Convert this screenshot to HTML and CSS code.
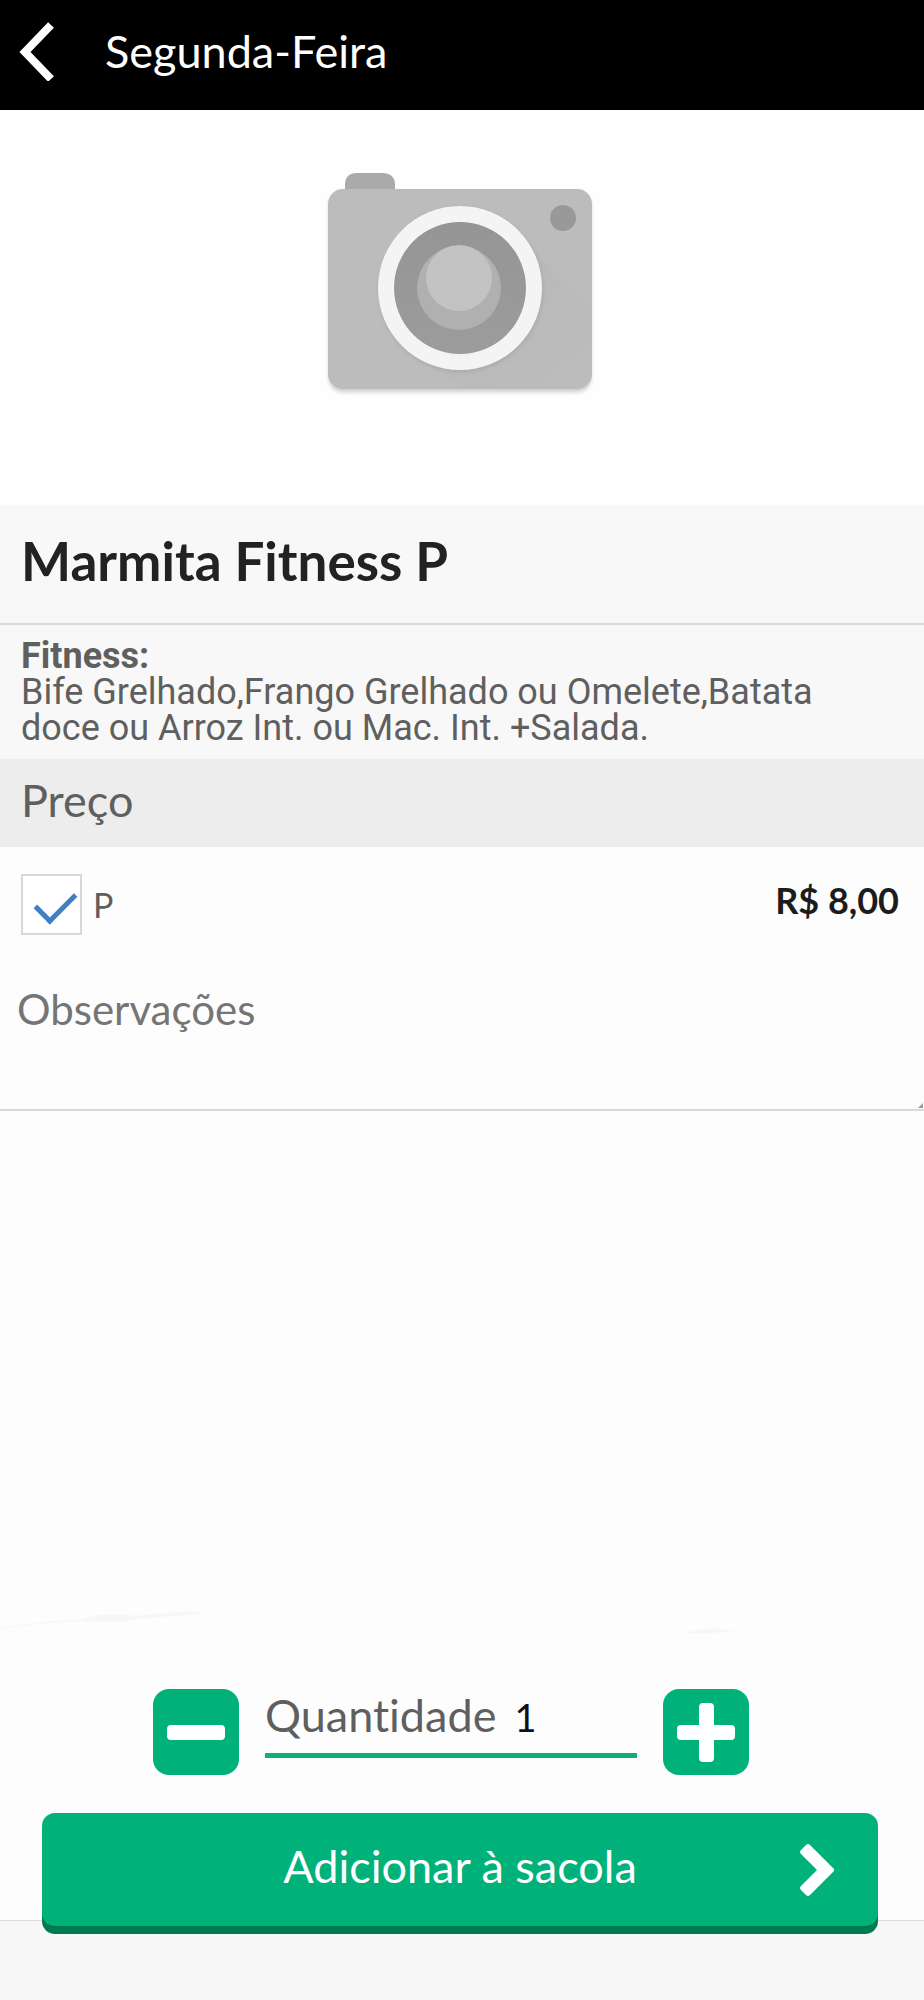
FILE: index.html
```html
<!DOCTYPE html>
<html lang="pt-BR">
<head>
<meta charset="utf-8">
<meta name="viewport" content="width=device-width, initial-scale=1">
<title>Marmita Fitness P</title>
<link rel="stylesheet" href="styles.css">
</head>
<body>
<header class="topbar">
  <button class="back" type="button" aria-label="Voltar">
    <svg viewBox="0 0 36 60" width="36" height="60" aria-hidden="true"><path d="M33 4 L7 31 L33 58" fill="none" stroke="#fff" stroke-width="8"/></svg>
  </button>
  <span class="topbar-title">Segunda-Feira</span>
</header>
<main class="product">
  <div class="photo">
    <svg viewBox="0 0 280 240" width="280" height="240" role="img" aria-label="Sem foto">
      <defs>
        <filter id="soft" x="-10%" y="-10%" width="120%" height="120%"><feGaussianBlur stdDeviation="2"/></filter>
        <linearGradient id="lens" x1="0" y1="0" x2="0" y2="1"><stop offset="0" stop-color="#959595"/><stop offset="1" stop-color="#9c9c9c"/></linearGradient>
        <linearGradient id="cast" x1="0" y1="0" x2="1" y2="1"><stop offset="0.3" stop-color="#adadad"/><stop offset="1" stop-color="#bdbdbd"/></linearGradient>
      </defs>
      <rect x="9" y="22" width="262" height="200" rx="14" fill="#ccc" filter="url(#soft)"/>
      <path d="M25 30V15q0-12 12-12h25q13 0 13 12v15z" fill="#aaa"/>
      <rect x="8" y="19" width="264" height="200" rx="15" fill="#bcbcbc"/>
      <path d="M203 70L272 138V204q0 15-15 15H150L94 188z" fill="url(#cast)" opacity=".25"/>
      <circle cx="141" cy="120" r="82" fill="#aaa" filter="url(#soft)"/>
      <circle cx="140" cy="118" r="82" fill="#f4f4f4"/>
      <circle cx="140" cy="118" r="66" fill="url(#lens)"/>
      <circle cx="139" cy="118" r="42" fill="#b0b0b0"/>
      <circle cx="139" cy="108" r="33" fill="#c3c3c3"/>
      <circle cx="243" cy="48" r="13" fill="#999"/>
    </svg>
  </div>
  <h1 class="name">Marmita Fitness P</h1>
  <div class="description">
    <strong class="kind">Fitness:</strong>
    <p class="dishes">Bife Grelhado,Frango Grelhado ou Omelete,Batata doce ou Arroz Int. ou Mac. Int. +Salada.</p>
  </div>
  <h2 class="section-title">Preço</h2>
  <div class="option">
    <label class="choice"><input class="tick" type="checkbox" checked><span>P</span></label>
    <span class="price">R$ 8,00</span>
  </div>
  <div class="notes">
    <textarea class="notes-field" aria-label="Observações" placeholder="Observações"></textarea>
    <svg class="grip" viewBox="0 0 6 6" width="6" height="6" aria-hidden="true"><path d="M0 5L5 0V5z" fill="#999"/></svg>
  </div>
</main>
<section class="order">
  <svg class="wave" viewBox="0 0 924 24" aria-hidden="true"><path d="M0 17Q60 8 78 9Q94 3 119 3Q134 6 154 3L190 0L203 3L160 6Q134 8 122 11L78 10Q40 12 0 18zM685 22Q712 14 734 20Q712 23 685 22z" fill="#f7f7f7"/></svg>
  <div class="quantity">
    <button class="step" type="button" aria-label="Diminuir"><svg viewBox="0 0 86 86" width="86" height="86" aria-hidden="true"><rect x="14" y="36" width="58" height="15" rx="4" fill="#fff"/></svg></button>
    <label class="amount"><span>Quantidade</span><input class="amount-field" type="text" inputmode="numeric" value="1"></label>
    <button class="step" type="button" aria-label="Aumentar"><svg viewBox="0 0 86 86" width="86" height="86" aria-hidden="true"><rect x="14" y="36" width="58" height="15" rx="4" fill="#fff"/><rect x="36" y="14" width="15" height="59" rx="4" fill="#fff"/></svg></button>
  </div>
  <button class="add" type="button">
    <span class="add-label">Adicionar à sacola</span>
    <svg viewBox="0 0 36 54" width="36" height="54" aria-hidden="true"><path d="M3 6L7 2Q9 0 11 2L35 26V28L11 52Q9 54 7 52L2 47Q0 45 2 43L18 27L2 11Q0 9 2 7z" fill="#fff"/></svg>
  </button>
</section>
<footer class="footer"></footer>
</body>
</html>
```
FILE: styles.css
```css
* { box-sizing: border-box; }
body {
  margin: 0;
  min-height: 100vh;
  display: flex;
  flex-direction: column;
  background: #fdfdfd;
  color: #5f5f5f;
  font-family: Lato, "Open Sans", sans-serif;
  font-size: 45px;
  line-height: 52px;
  font-variant-ligatures: none;
}
button, input, textarea { font: inherit; }
button { border: 0; padding: 0; cursor: pointer; }
svg { display: block; }
.topbar {
  display: flex;
  align-items: center;
  gap: 51px;
  height: 110px;
  padding: 0 18px 8px;
  background: #000;
  color: #fff;
}
.back { background: none; }
.product { flex: 1; }
.photo {
  display: flex;
  justify-content: center;
  padding: 60px 4px 95px 0;
  background: #fefefe;
}
.name {
  margin: 0;
  padding: 29px 21px 36px;
  border-bottom: 2px solid #d8d8d8;
  background: #f8f8f8;
  color: #222;
  font-size: 53px;
  line-height: 53px;
  font-weight: 700;
}
.description {
  padding: 13px 80px 13px 21px;
  background: #f8f8f8;
  font-family: Roboto, sans-serif;
  font-size: 36px;
  line-height: 36px;
}
.kind { display: block; }
.dishes { margin: 0; }
.section-title {
  margin: 0;
  padding: 15px 21px 21px;
  background: #ededed;
  font-size: 45px;
  font-weight: 400;
}
.option {
  display: flex;
  justify-content: space-between;
  padding: 27px 25px 26px 21px;
  font-size: 36px;
}
.choice {
  display: flex;
  align-items: center;
  gap: 11px;
  font-size: 34px;
}
.tick {
  appearance: none;
  display: grid;
  place-items: center;
  width: 61px;
  height: 61px;
  margin: 0;
  border: 2px solid #d8d8d8;
  background: #fff;
}
.tick:checked::before {
  content: "";
  width: 34px;
  height: 18px;
  margin: 0 0 4px 7px;
  border: solid #427fc4;
  border-width: 0 0 5px 5px;
  transform: rotate(-45deg);
}
.price { color: #1c1c1c; font-weight: 700; }
.notes { position: relative; }
.notes-field {
  display: block;
  width: 100%;
  height: 150px;
  padding: 22px 17px;
  border: 0;
  border-bottom: 2px solid #d8d8d8;
  background: transparent;
  color: #5f5f5f;
  font-size: 42px;
  resize: none;
  outline: 0;
}
.notes-field::placeholder { color: #757575; opacity: 1; }
.grip { position: absolute; right: 0; bottom: 2px; }
.wave { width: 100%; }
.quantity {
  display: flex;
  justify-content: center;
  gap: 26px;
  padding: 54px 22px 38px 0;
}
.step {
  width: 86px;
  height: 86px;
  border-radius: 16px;
  background: #00b27a;
}
.amount {
  display: flex;
  align-items: flex-start;
  gap: 18px;
  width: 372px;
  height: 69px;
  border-bottom: 5px solid #0fae7b;
}
.amount-field {
  flex: 1;
  min-width: 0;
  padding: 2px 0 0;
  border: 0;
  background: none;
  color: #111;
  font-size: 38px;
  outline: 0;
}
.add {
  position: relative;
  display: flex;
  align-items: center;
  width: calc(100% - 88px);
  height: 113px;
  margin: 0 46px -6px 42px;
  padding: 0 43px 0 79px;
  border-radius: 13px;
  background: #00b27a;
  box-shadow: 0 8px 0 #007a50;
  color: #fff;
}
.add-label { flex: 1; padding-bottom: 8px; }
.footer {
  height: 80px;
  border-top: 1px solid #ddd;
  background: #f7f7f7;
}
```
